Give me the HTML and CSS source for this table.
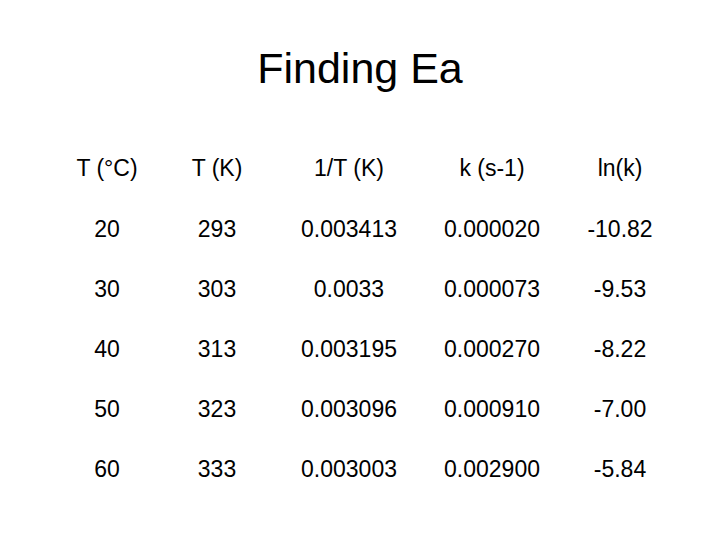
FILE: index.html
```html
<!DOCTYPE html>
<html lang="en">
<head>
  <meta charset="UTF-8" />
  <title>Finding Ea</title>
  <link rel="stylesheet" href="styles.css">
</head>
<body>

  <h1>Finding Ea</h1>

  <div class="data-table">
    <div class="row head">
      <span>T (&deg;C)</span>
      <span>T (K)</span>
      <span>1/T (K)</span>
      <span>k (s-1)</span>
      <span>ln(k)</span>
    </div>
    <div class="row">
      <span>20</span><span>293</span><span>0.003413</span><span>0.000020</span><span>-10.82</span>
    </div>
    <div class="row">
      <span>30</span><span>303</span><span>0.0033</span><span>0.000073</span><span>-9.53</span>
    </div>
    <div class="row">
      <span>40</span><span>313</span><span>0.003195</span><span>0.000270</span><span>-8.22</span>
    </div>
    <div class="row">
      <span>50</span><span>323</span><span>0.003096</span><span>0.000910</span><span>-7.00</span>
    </div>
    <div class="row">
      <span>60</span><span>333</span><span>0.003003</span><span>0.002900</span><span>-5.84</span>
    </div>
  </div>

</body>
</html>
```

FILE: styles.css
```css
body {
  background: #ffffff;
  color: #000000;
  font-family: 'Liberation Sans', Arial, sans-serif;
  margin: 0;
  padding: 43px 0 0;
}

h1 {
  font-size: 43px;
  font-weight: normal;
  line-height: 50px;
  text-align: center;
  margin: 0 0 45px;
}

.data-table {
  margin-left: 52px;
  width: 630px;
}

.row {
  display: grid;
  grid-template-columns: 110px 110px 154px 132px 124px;
  height: 60px;
  line-height: 60px;
  font-size: 23px;
  text-align: center;
}

.row.head {
  height: 61px;
}
```
